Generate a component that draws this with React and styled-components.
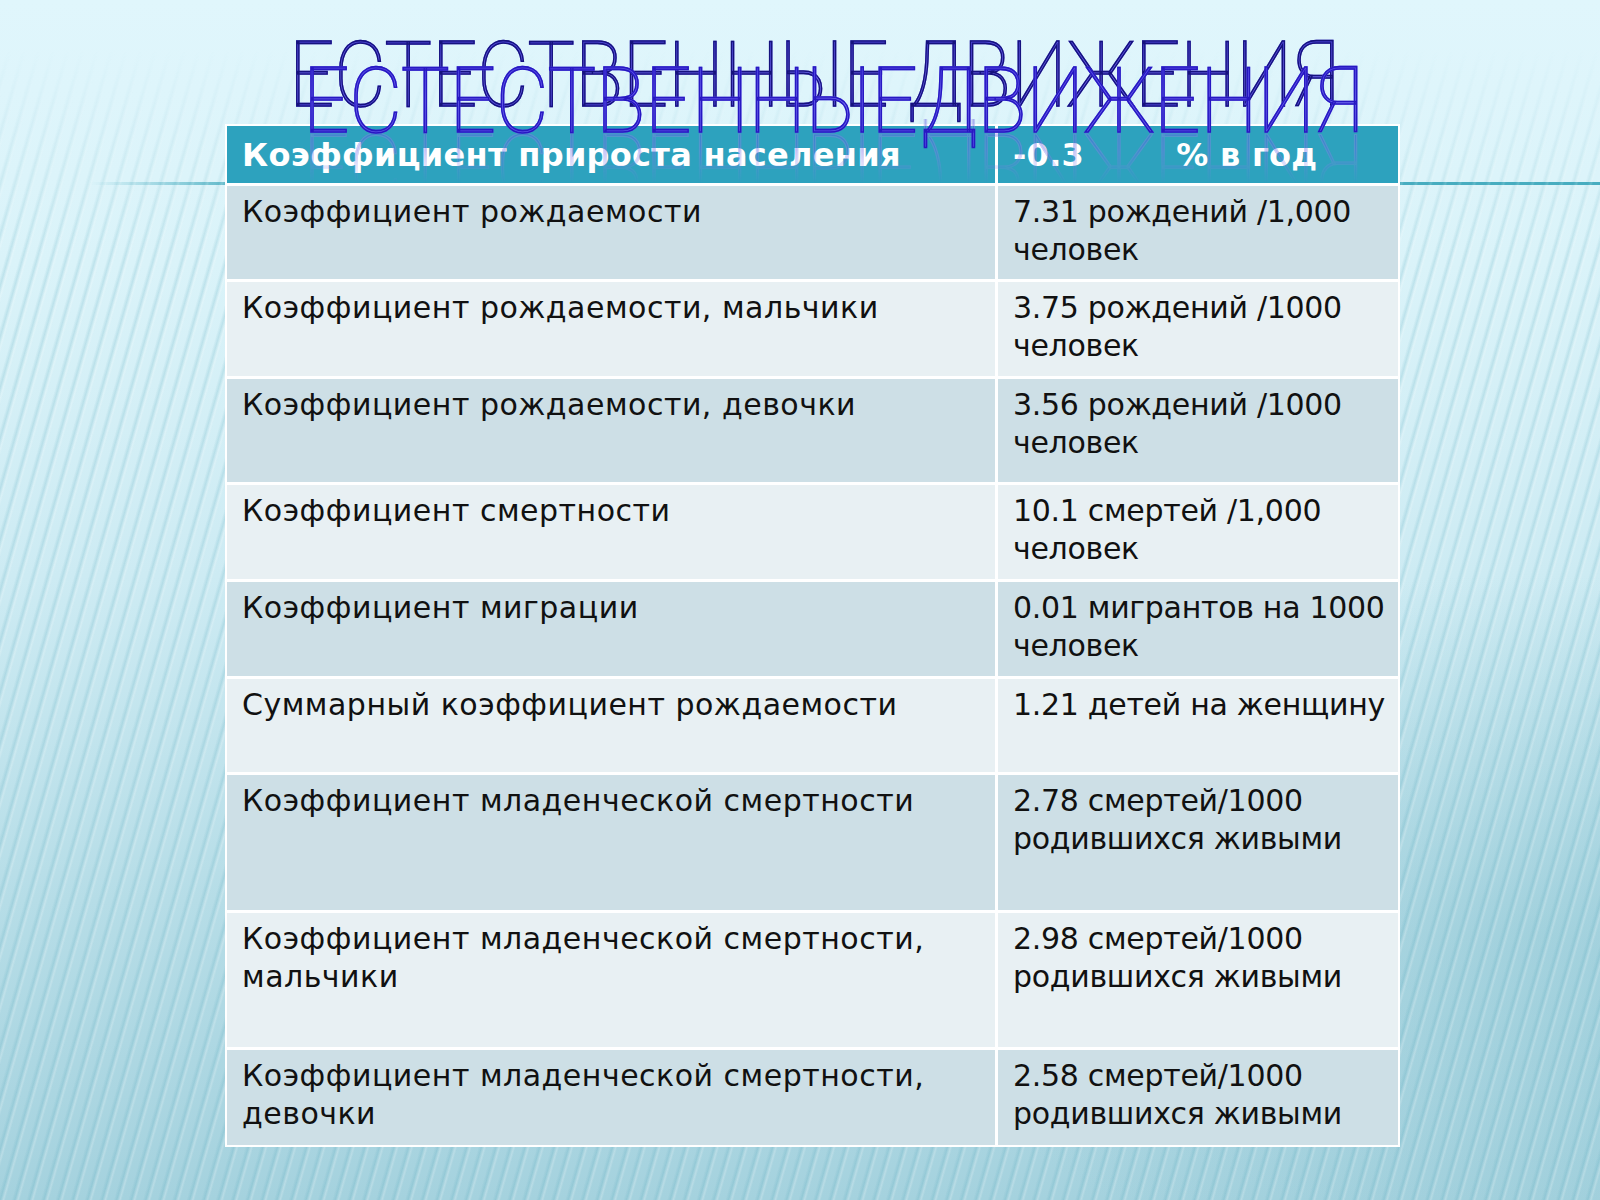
import styled, { createGlobalStyle } from "styled-components";

const GlobalStyle = createGlobalStyle`
  html, body {
    margin: 0;
    padding: 0;
  }
  body {
    font-family: "DejaVu Sans", "Noto Sans", sans-serif;
  }
`;

const rows = [
  { name: "Коэффициент рождаемости", value: "7.31 рождений /1,000\nчеловек", h: 93, tone: "dark" },
  { name: "Коэффициент рождаемости, мальчики", value: "3.75 рождений /1000\nчеловек", h: 94, tone: "light" },
  { name: "Коэффициент рождаемости, девочки", value: "3.56 рождений /1000\nчеловек", h: 103, tone: "dark" },
  { name: "Коэффициент смертности", value: "10.1 смертей /1,000\nчеловек", h: 94, tone: "light" },
  { name: "Коэффициент миграции", value: "0.01 мигрантов на 1000\nчеловек", h: 94, tone: "dark" },
  { name: "Суммарный коэффициент рождаемости", value: "1.21 детей на женщину", h: 93, tone: "light" },
  { name: "Коэффициент младенческой смертности", value: "2.78 смертей/1000\nродившихся живыми", h: 135, tone: "dark" },
  { name: "Коэффициент младенческой смертности,\nмальчики", value: "2.98 смертей/1000\nродившихся живыми", h: 134, tone: "light" },
  { name: "Коэффициент младенческой смертности,\nдевочки", value: "2.58 смертей/1000\nродившихся живыми", h: 95, tone: "dark" },
];

const Slide = styled.div`
  position: relative;
  width: 1600px;
  height: 1200px;
  overflow: hidden;
  background:
    linear-gradient(90deg, rgba(71, 173, 192, 0) 90px, #47adc0 260px) 0 182px / 100% 3px no-repeat,
    radial-gradient(ellipse 900px 520px at 96% 78%, rgba(140, 196, 210, 0.45), rgba(140, 196, 210, 0) 70%),
    linear-gradient(180deg, #e0f6fc 0%, #daf3f9 22%, #cdebf3 48%, #b6dde7 75%, #a5d2de 100%);

  &::before {
    content: "";
    position: absolute;
    inset: 0;
    background: repeating-linear-gradient(
      106deg,
      rgba(255, 255, 255, 0) 0px,
      rgba(255, 255, 255, 0) 6px,
      rgba(80, 165, 185, 0.2) 9px,
      rgba(255, 255, 255, 0.22) 12px,
      rgba(255, 255, 255, 0) 14px
    );
    -webkit-mask-image: linear-gradient(180deg, transparent 50px, #000 260px);
    mask-image: linear-gradient(180deg, transparent 50px, #000 260px);
  }
`;

const Content = styled.div`
  position: relative;
  z-index: 1;
  display: flex;
  flex-direction: column;
  padding: 0 0 0 225px;
`;

const TitleArea = styled.div`
  position: relative;
  height: 124px;
`;

const TitleText = styled.div`
  position: absolute;
  top: ${(p) => p.$top}px;
  left: ${(p) => p.$left}px;
  font-family: Roboto, "DejaVu Sans", sans-serif;
  font-weight: 100;
  font-size: 90px;
  line-height: 1;
  white-space: nowrap;
  word-spacing: ${(p) => p.$wordSpacing}px;
  transform-origin: 0 0;
  transform: scaleX(${(p) => p.$scale});
  color: transparent;
  background: linear-gradient(180deg, #4c44e0 0%, #726af0 50%, #4f47e4 100%);
  -webkit-background-clip: text;
  background-clip: text;
  -webkit-text-stroke: 1.6px ${(p) => p.$ink};
  z-index: 3;
`;

const Reflection = styled(TitleText)`
  transform: scaleX(${(p) => p.$scale}) scaleY(-1);
  transform-origin: 0 ${(p) => p.$flipAt}px;
  -webkit-text-stroke: 1.2px #8c86e4;
  opacity: 0.4;
  -webkit-mask-image: linear-gradient(0deg, #000 35%, transparent 72%);
  mask-image: linear-gradient(0deg, #000 35%, transparent 72%);
  z-index: 2;
`;

const Table = styled.div`
  display: grid;
  grid-template-columns: 768px 400px;
  gap: 3px;
  width: 1175px;
  box-sizing: border-box;
  padding: 2px;
  background: #ffffff;
`;

const HeadCell = styled.div`
  height: 57px;
  display: flex;
  align-items: center;
  gap: ${(p) => p.$gap || 0}px;
  padding: 0 15px;
  box-sizing: border-box;
  background: #2da2be;
  color: #ffffff;
  font-weight: bold;
  font-size: 32px;
  letter-spacing: 0.3px;
  line-height: 38px;
  white-space: nowrap;
`;

const Cell = styled.div`
  height: ${(p) => p.$h}px;
  padding: 7px 15px 0;
  box-sizing: border-box;
  background: ${(p) => (p.$tone === "dark" ? "#cddfe6" : "#e8f0f3")};
  color: #111111;
  font-size: 30px;
  line-height: 37.5px;
  white-space: pre;
  letter-spacing: ${(p) => p.$spacing || 0}px;
`;

function App() {
  const title = "ЕСТЕСТВЕННЫЕ ДВИЖЕНИЯ";
  return (
    <>
      <GlobalStyle />
      <Slide>
        <Content>
          <TitleArea>
            <TitleText $top={31} $left={64} $scale={0.882} $wordSpacing={0} $ink="#16127e">
              {title}
            </TitleText>
            <TitleText $top={57} $left={78} $scale={0.904} $wordSpacing={-18} $ink="#2718c2">
              {title}
            </TitleText>
            <Reflection $top={57} $left={78} $scale={0.904} $wordSpacing={-18} $ink="#8c86e4" $flipAt={76}>
              {title}
            </Reflection>
          </TitleArea>
          <Table>
            <HeadCell>Коэффициент прироста населения</HeadCell>
            <HeadCell $gap={92}>
              <span>-0.3</span>
              <span>% в год</span>
            </HeadCell>
            {rows.map((r) => (
              <>
                <Cell key={r.name} $h={r.h} $tone={r.tone} $spacing={0.5}>
                  {r.name}
                </Cell>
                <Cell key={r.value} $h={r.h} $tone={r.tone} $spacing={-0.3}>
                  {r.value}
                </Cell>
              </>
            ))}
          </Table>
        </Content>
      </Slide>
    </>
  );
}

export default App;
